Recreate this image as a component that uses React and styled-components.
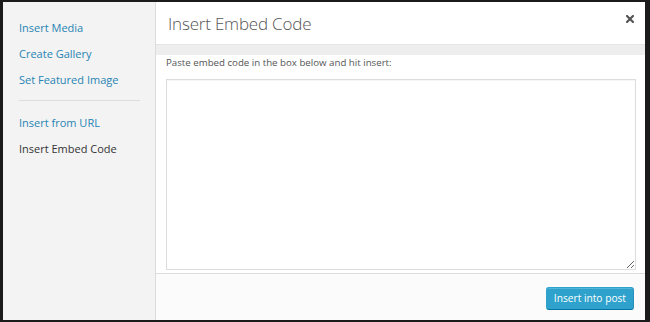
import React from "react";
import styled, { createGlobalStyle } from "styled-components";

const Global = createGlobalStyle`
  html, body { margin: 0; padding: 0; }
  body { background: #1b1b1b; font-family: "Open Sans", "Liberation Sans", sans-serif; }
  #root { width: 650px; height: 322px; }
`;

const Backdrop = styled.div`
  width: 650px;
  height: 322px;
  box-sizing: border-box;
  padding: 2px 5px 2px 3px;
`;

const Modal = styled.div`
  display: flex;
  height: 100%;
  background: #fff;
`;

const Sidebar = styled.nav`
  width: 153px;
  flex: none;
  background: #f3f3f3;
  border-right: 1px solid #dddddd;
  padding-top: 16px;
  box-sizing: border-box;
  display: flex;
  flex-direction: column;
`;

const MenuItem = styled.a`
  display: block;
  padding: 0 16px;
  height: 26px;
  line-height: 20px;
  font-size: 11px;
  color: ${(p) => (p.$active ? "#333333" : "#2784b3")};
  text-decoration: none;
`;

const Separator = styled.div`
  margin: 4px 15px 12px 16px;
  height: 1px;
  background: #dddddd;
`;

const Main = styled.section`
  flex: 1;
  display: flex;
  flex-direction: column;
  min-width: 0;
`;

const Header = styled.header`
  height: 42px;
  display: flex;
  align-items: center;
  justify-content: space-between;
  padding: 0 11px 0 12px;
  background: #fff;
  border-bottom: 1px solid #e4e4e4;
`;

const Title = styled.h1`
  margin: 0;
  font-size: 17px;
  font-weight: 300;
  color: #555;
  letter-spacing: -0.2px;
`;

const Close = styled.svg`
  width: 8px;
  height: 8px;
  margin-top: -8px;
  flex: none;
`;

const Band = styled.div`
  height: 10px;
  background: #eeeeee;
`;

const Content = styled.div`
  flex: 1;
  display: flex;
  flex-direction: column;
  padding: 1px 9px 3px 10px;
`;

const Label = styled.label`
  font-size: 9.7px;
  color: #555;
  line-height: 14px;
  margin-bottom: 9px;
`;

const Area = styled.textarea`
  flex: 1;
  resize: vertical;
  border: 1px solid #dddddd;
  box-shadow: inset 0 1px 1px rgba(0,0,0,0.04);
  outline: none;
  margin: 0;
  background: #fff;
`;

const Toolbar = styled.footer`
  height: 47px;
  flex: none;
  border-top: 1px solid #dddddd;
  background: #fbfbfb;
  display: flex;
  align-items: center;
  justify-content: flex-end;
  padding: 0 11px 0 0;
  box-sizing: border-box;
`;

const Button = styled.button`
  height: 23px;
  padding: 0 7px;
  font-family: "Open Sans", "Liberation Sans", sans-serif;
  font-size: 10.2px;
  color: #fff;
  background: #2ea2cc;
  border: 1px solid #0074a2;
  border-color: #2ea2cc #2b8fbb #0074a2 #2ea2cc;
  border-radius: 3px;
  box-shadow: inset 0 1px 0 rgba(120,200,230,0.5);
  margin-top: 2px;
`;

export default function App() {
  return (
    <>
      <Global />
      <Backdrop>
        <Modal>
          <Sidebar>
            <MenuItem>Insert Media</MenuItem>
            <MenuItem>Create Gallery</MenuItem>
            <MenuItem>Set Featured Image</MenuItem>
            <Separator />
            <MenuItem>Insert from URL</MenuItem>
            <MenuItem $active>Insert Embed Code</MenuItem>
          </Sidebar>
          <Main>
            <Header>
              <Title>Insert Embed Code</Title>
              <Close viewBox="0 0 8 8">
                <path d="M1 1 L7 7 M7 1 L1 7" stroke="#555" strokeWidth="2.2" strokeLinecap="square" />
              </Close>
            </Header>
            <Band />
            <Content>
              <Label>Paste embed code in the box below and hit insert:</Label>
              <Area />
            </Content>
            <Toolbar>
              <Button>Insert into post</Button>
            </Toolbar>
          </Main>
        </Modal>
      </Backdrop>
    </>
  );
}
